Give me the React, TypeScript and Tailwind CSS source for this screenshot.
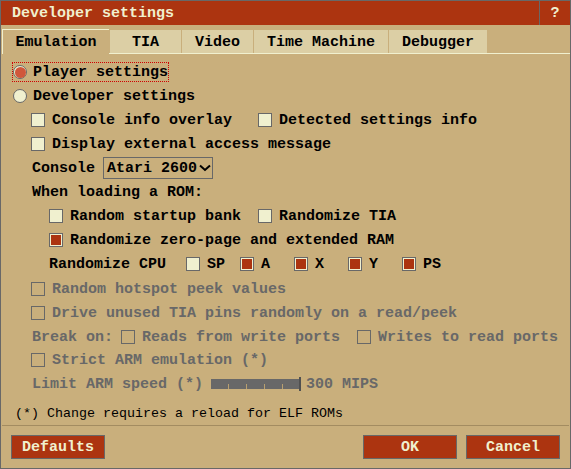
import React from "react";

const mono = "font-['Liberation_Mono','DejaVu_Sans_Mono',monospace] font-bold";

function Box({ checked = false, disabled = false }: { checked?: boolean; disabled?: boolean }) {
  return (
    <span
      className={`w-[14px] h-[14px] shrink-0 border border-[#686868] flex items-center justify-center ${
        disabled ? "" : "bg-[#f0f0cf]"
      }`}
    >
      {checked && <span className="w-[10px] h-[10px] bg-[#ac3410]" />}
    </span>
  );
}

function Check({
  label,
  checked = false,
  disabled = false,
  className = "",
}: {
  label: string;
  checked?: boolean;
  disabled?: boolean;
  className?: string;
}) {
  return (
    <div className={`flex items-center ${className}`}>
      <Box checked={checked} disabled={disabled} />
      <span className={`ml-[7px] whitespace-pre pt-px ${disabled ? "text-[#686868]" : "text-black"}`}>{label}</span>
    </div>
  );
}

function Radio({ selected = false }: { selected?: boolean }) {
  return (
    <span className="w-[14px] h-[14px] shrink-0 rounded-full border border-[#686868] flex items-center justify-center bg-[#f0f0cf]">
      {selected && <span className="w-[11px] h-[11px] rounded-full bg-[#d0573b]" />}
    </span>
  );
}

const cpuRegs = [
  { name: "SP", on: false },
  { name: "A", on: true },
  { name: "X", on: true },
  { name: "Y", on: true },
  { name: "PS", on: true },
];

export default function App() {
  return (
    <div className={`w-[571px] h-[469px] border border-[#686868] bg-[#c9af7c] flex flex-col text-[15px] leading-none ${mono}`}>
      {/* Title bar */}
      <div className="h-[24px] flex bg-[#ac3410] text-[#f0f0cf]">
        <div className="flex-1 flex items-center pl-[11px] pt-px">Developer settings</div>
        <div className="w-[31px] border-l border-[#686868] flex items-center justify-center pt-px">?</div>
      </div>

      {/* Tabs */}
      <div className="mt-[4px] h-[25px] flex">
        <div className="ml-px w-[107px] h-[25px] border-t border-l border-[#f0f0cf] flex items-center justify-center text-black">
          Emulation
        </div>
        <div className="flex-1 h-[25px] flex items-end border-b border-[#f0f0cf]">
          {[
            { t: "TIA", w: "w-[72px]" },
            { t: "Video", w: "w-[72px]" },
            { t: "Time Machine", w: "w-[135px]" },
            { t: "Debugger", w: "w-[99px]" },
          ].map((tab) => (
            <div
              key={tab.t}
              className={`${tab.w} h-[23px] border-l border-[#c9af7c] bg-[#dccfa5] flex items-center justify-center text-black pt-[2px]`}
            >
              {tab.t}
            </div>
          ))}
        </div>
      </div>

      {/* Body */}
      <div className="flex flex-col pt-[6px] text-black">
        <div className="h-[24px] flex items-center pl-[11px]">
          <div className="h-[20px] flex items-center border border-dotted border-[#d00000]">
            <Radio selected />
            <span className="ml-[6px] pt-px">Player settings</span>
          </div>
        </div>
        <div className="h-[24px] flex items-center pl-[12px]">
          <Radio />
          <span className="ml-[6px] pt-px">Developer settings</span>
        </div>
        <div className="h-[24px] flex items-center pl-[30px]">
          <Check label="Console info overlay" className="w-[227px]" />
          <Check label="Detected settings info" />
        </div>
        <div className="h-[24px] flex items-center pl-[30px]">
          <Check label="Display external access message" />
        </div>
        <div className="h-[24px] flex items-center pl-[31px]">
          <span className="w-[71px] pt-px">Console</span>
          <div className="w-[110px] h-[22px] border border-[#686868] flex items-center pl-[3px]">
            <span className="pt-px">Atari 2600</span>
            <svg width="12" height="8" viewBox="0 0 12 8" className="ml-[2px]">
              <polyline points="1,1.5 6,6 11,1.5" fill="none" stroke="#000" strokeWidth="2" />
            </svg>
          </div>
        </div>
        <div className="h-[24px] flex items-center pl-[31px]">
          <span className="pt-px">When loading a ROM:</span>
        </div>
        <div className="h-[24px] flex items-center pl-[48px]">
          <Check label="Random startup bank" className="w-[209px]" />
          <Check label="Randomize TIA" />
        </div>
        <div className="h-[24px] flex items-center pl-[48px]">
          <Check label="Randomize zero-page and extended RAM" checked />
        </div>
        <div className="h-[24px] flex items-center pl-[48px]">
          <span className="w-[137px] pt-px">Randomize CPU</span>
          {cpuRegs.map((r) => (
            <Check key={r.name} label={r.name} checked={r.on} className="w-[54px]" />
          ))}
        </div>
        <div className="mt-px h-[24px] flex items-center pl-[30px]">
          <Check label="Random hotspot peek values" disabled />
        </div>
        <div className="h-[24px] flex items-center pl-[30px]">
          <Check label="Drive unused TIA pins randomly on a read/peek" disabled />
        </div>
        <div className="h-[24px] flex items-center pl-[31px] text-[#686868]">
          <span className="w-[89px] pt-px">Break on:</span>
          <Check label="Reads from write ports" disabled className="w-[236px]" />
          <Check label="Writes to read ports" disabled />
        </div>
        <div className="-mt-px h-[24px] flex items-center pl-[30px]">
          <Check label="Strict ARM emulation (*)" disabled />
        </div>
        <div className="h-[24px] flex items-center pl-[31px] text-[#686868]">
          <span className="w-[179px] pt-px">Limit ARM speed (*)</span>
          <div className="relative w-[88px] h-[10px] bg-[#686868]">
            {[17, 35, 53, 71].map((x) => (
              <span key={x} className="absolute bottom-0 w-px h-[5px] bg-[#b8a070]" style={{ left: x }} />
            ))}
          </div>
          <span className="w-[2px] h-[14px] bg-[#505050]" />
          <span className="ml-[5px] pt-px">300 MIPS</span>
        </div>
        <div className="mt-[7px] h-[20px] flex items-center pl-[14px] text-[13.33px] font-normal">
          <span className="pt-px">(*) Change requires a reload for ELF ROMs</span>
        </div>
      </div>

      <div className="mt-[2px] mx-px h-px bg-[#a38c61]" />

      {/* Buttons */}
      <div className="mt-[9px] flex px-[10px]">
        <button className="w-[94px] h-[24px] border border-[#686868] bg-[#ac3410] text-[#f0f0cf] flex items-center justify-center pt-px">
          Defaults
        </button>
        <div className="flex-1" />
        <div className="flex gap-[9px]">
          <button className="w-[94px] h-[24px] border border-[#686868] bg-[#ac3410] text-[#f0f0cf] flex items-center justify-center pt-px">
            OK
          </button>
          <button className="w-[94px] h-[24px] border border-[#686868] bg-[#ac3410] text-[#f0f0cf] flex items-center justify-center pt-px">
            Cancel
          </button>
        </div>
      </div>
    </div>
  );
}
